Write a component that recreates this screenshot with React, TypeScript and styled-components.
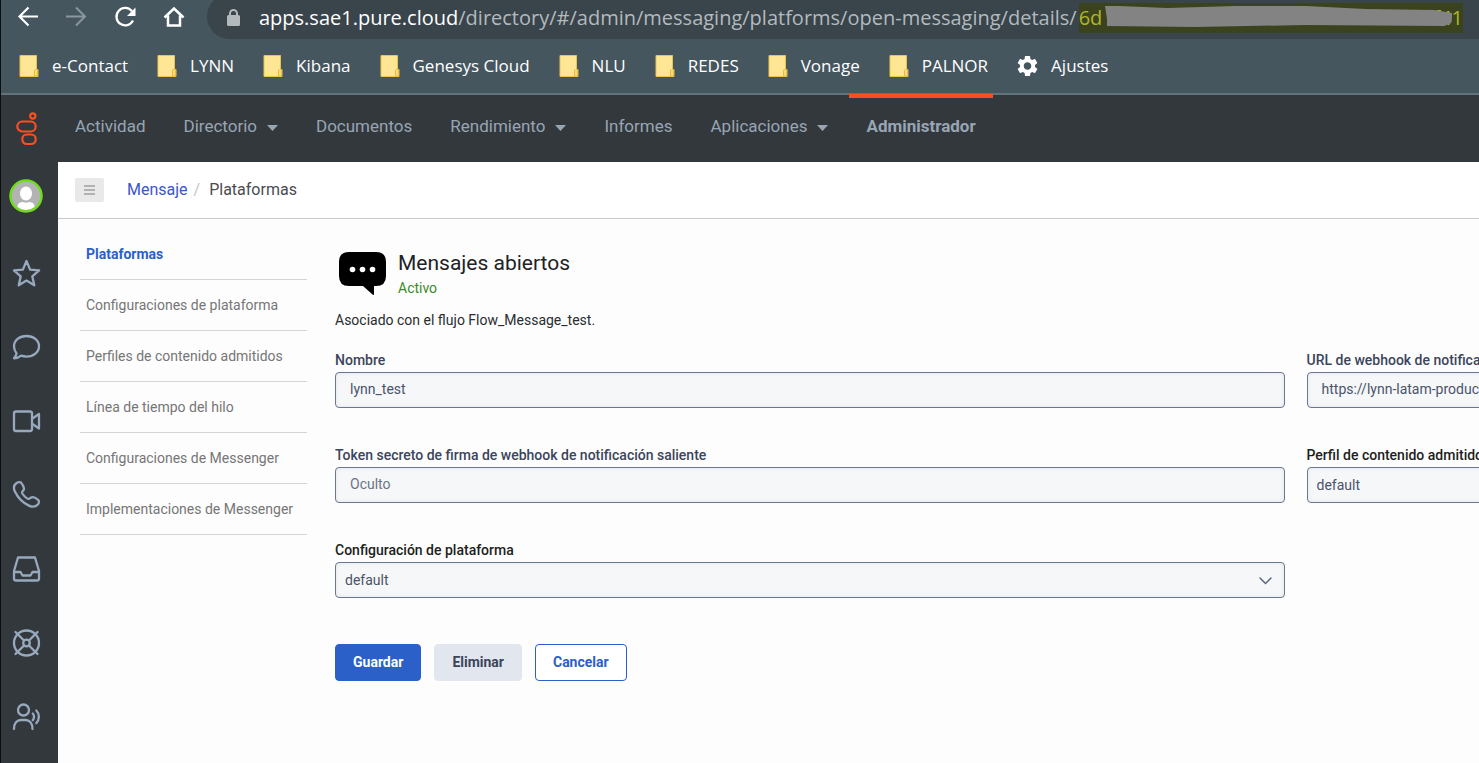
import React from "react";
import styled, { createGlobalStyle, css } from "styled-components";

const ui = `Roboto, "Liberation Sans", sans-serif`;
const chrome = `"Open Sans", "Noto Sans", sans-serif`;

const Global = createGlobalStyle`
  *, *::before, *::after { box-sizing: border-box; }
  body { margin: 0; font-family: ${ui}; font-size: 14px; background: #fdfdfd; overflow: hidden; }
  a { text-decoration: none; color: inherit; }
  button { font: inherit; padding: 0; border: 0; background: none; cursor: pointer; }
  svg { display: block; flex: none; }
`;

const Page = styled.div`
  min-height: 100vh;
  display: flex;
  flex-direction: column;
  border-left: 1px solid #0b0d0f;
  background: #33383d;
`;

/* browser frame */
const Browser = styled.header`
  background: #45565f;
  color: #fff;
  font-family: ${chrome};
  border-bottom: 2px solid #61737c;
`;
const AddressRow = styled.div`
  display: flex;
  align-items: flex-start;
  height: 39px;
  overflow: hidden;
`;
const Tools = styled.div`
  display: flex;
  gap: 26px;
  padding: 5px 21px 0 15px;
`;
const ToolButton = styled.button<{ $dim?: boolean }>`
  width: 23px;
  height: 24px;
  color: ${(p) => (p.$dim ? "#8b979d" : "#fff")};
`;
const AddressBar = styled.div`
  flex: 1;
  min-width: 0;
  display: flex;
  align-items: center;
  height: 45px;
  margin-top: -6px;
  padding: 3px 16px 0 20px;
  border-radius: 23px 0 0 23px;
  background: #39444b;
  font-size: 20px;
  line-height: 30px;
  white-space: nowrap;
  color: #b3babe;
`;
const Host = styled.span`
  margin-left: 19px;
  color: #fff;
`;
const Token = styled.span`
  flex: 1;
  position: relative;
  display: flex;
  justify-content: space-between;
  margin-left: 2px;
  background: #3a431d;
  color: #b0b52c;
`;
const Scribble = styled.svg`
  position: absolute;
  left: 26px;
  top: 3px;
  width: calc(100% - 37px);
  height: 21px;
`;
const Bookmarks = styled.nav`
  display: flex;
  align-items: center;
  gap: 29px;
  height: 54px;
  padding: 0 0 1px 18px;
  font-size: 17px;
`;
const Bookmark = styled.a`
  display: flex;
  align-items: center;
  gap: 13px;
  white-space: nowrap;
`;

/* application frame */
const Shell = styled.div`
  flex: 1;
  display: grid;
  grid-template-columns: 57px minmax(0, 1fr);
`;
const Rail = styled.aside`
  display: flex;
  flex-direction: column;
  background: #33383d;
  color: #98a9be;
`;
const LogoLink = styled.a`
  padding: 17px 0 0 15px;
  height: 84px;
`;
const RailButton = styled.button`
  height: 74px;
  padding-left: 11px;
  color: inherit;
  display: flex;
  align-items: center;
`;
const Avatar = styled.button`
  width: 34px;
  height: 34px;
  margin: 0 0 23px 8px;
`;
const Body = styled.div`
  display: flex;
  flex-direction: column;
  min-width: 0;
`;
const TopNav = styled.nav`
  display: flex;
  gap: 4px;
  height: 67px;
  background: #33383d;
`;
const TopItem = styled.a<{ $active?: boolean }>`
  display: flex;
  align-items: center;
  gap: 10px;
  padding: 0 17px 8px;
  border-top: 4px solid ${(p) => (p.$active ? "#f5501e" : "transparent")};
  margin-top: -1px;
  color: #98a5b3;
  font-size: 17px;
  font-weight: ${(p) => (p.$active ? 700 : 400)};
  white-space: nowrap;
`;
const Crumbs = styled.div`
  display: flex;
  align-items: center;
  height: 57px;
  padding: 0 17px 1px;
  border-bottom: 1px solid #c9c9c9;
  background: #fff;
  font-size: 16px;
  color: #4a4c50;
`;
const MenuButton = styled.button`
  display: grid;
  place-items: center;
  width: 29px;
  height: 24px;
  margin-right: 23px;
  border-radius: 2px;
  background: #e9e9e9;
  color: #a0a0a0;
`;
const CrumbLink = styled.a`
  color: #3a56cf;
`;
const Slash = styled.span`
  margin: 0 9px 0 6px;
  color: #c4c4c4;
`;
const Workspace = styled.div`
  flex: 1;
  display: grid;
  grid-template-columns: 227px minmax(0, 1fr);
  gap: 28px;
  padding: 10px 0 0 22px;
  background: #fdfdfd;
`;
const SideNav = styled.nav`
  display: flex;
  flex-direction: column;
`;
const SideItem = styled.a<{ $active?: boolean }>`
  height: 51px;
  padding-left: 6px;
  border-bottom: 1px solid #d4d4d4;
  line-height: 50px;
  font-size: 14px;
  white-space: nowrap;
  color: ${(p) => (p.$active ? "#2b5fcc" : "#767676")};
  font-weight: ${(p) => (p.$active ? 700 : 400)};
`;
const Main = styled.main`
  overflow: hidden;
  padding-top: 19px;
`;
const Heading = styled.div`
  display: flex;
  gap: 11px;
  padding-left: 3px;
`;
const Title = styled.h1`
  margin: 0;
  font-size: 21px;
  line-height: 30px;
  font-weight: 400;
  color: #202224;
`;
const Status = styled.p`
  margin: 0;
  line-height: 20px;
  color: #3c8a28;
`;
const Note = styled.p`
  margin: 12px 0 20px;
  line-height: 20px;
  color: #2a2c2e;
`;
const Form = styled.form`
  display: grid;
  grid-template-columns: 83% 83%;
  column-gap: 22px;
  row-gap: 37px;
`;
const Field = styled.div`
  display: flex;
  flex-direction: column;
`;
const Label = styled.label<{ $dark?: boolean }>`
  height: 22px;
  line-height: 20px;
  font-size: 14px;
  font-weight: 500;
  white-space: nowrap;
  color: ${(p) => (p.$dark ? "#1c1e20" : "#3b455c")};
`;
const control = css`
  width: 100%;
  height: 36px;
  border: 1px solid #6b7690;
  border-radius: 4px;
  background: #f6f7f9;
  box-shadow: inset 0 0 4px #dfe3ea;
  font-family: ${ui};
  font-size: 14px;
  color: #4a5468;
`;
const Input = styled.input`
  ${control}
  padding: 0 14px 2px;
  &::placeholder { color: #6b7484; opacity: 1; }
`;
const SelectBox = styled.div`
  position: relative;
`;
const Select = styled.select`
  ${control}
  appearance: none;
  padding: 0 9px;
`;
const Chevron = styled.svg`
  position: absolute;
  right: 13px;
  top: 15px;
`;
const Actions = styled.div`
  grid-column: 1 / -1;
  display: flex;
  gap: 13px;
  padding-top: 9px;
`;
const tones = {
  primary: css`background: #2a60c8; border-color: #2a60c8; color: #fff;`,
  muted: css`background: #e2e6ee; border-color: #e2e6ee; color: #3b455c;`,
  outline: css`background: #fff; border-color: #2a60c8; color: #2a60c8;`,
};
const Button = styled.button<{ $tone: keyof typeof tones }>`
  height: 37px;
  padding: 0 17px 2px;
  border: 1px solid;
  border-radius: 4px;
  font-size: 14px;
  font-weight: 700;
  ${(p) => tones[p.$tone]}
`;

const Folder = () => (
  <svg width="20" height="22" viewBox="0 0 20 22">
    <path d="M1 .5h16.500v14h1.500v7H1z" fill="#ffe694" stroke="#e9c64b" />
    <path d="M15.500 21v-5.500q0-1 1-1h2v6.500z" fill="#fbdc7c" stroke="#e3bd3c" />
  </svg>
);
const Caret = () => (
  <svg width="11" height="9" viewBox="0 0 11 9"><path d="M0 3h11L5.500 9z" fill="currentColor" /></svg>
);
const Line = ({ children }: { children: React.ReactNode }) => (
  <svg width="29" height="29" viewBox="0 0 29 29" fill="none" stroke="currentColor" strokeWidth="2.300" strokeLinejoin="round" strokeLinecap="round">
    {children}
  </svg>
);

const folders = ["e-Contact", "LYNN", "Kibana", "Genesys Cloud", "NLU", "REDES", "Vonage", "PALNOR"];
const topItems = [
  { label: "Actividad" },
  { label: "Directorio", menu: true },
  { label: "Documentos" },
  { label: "Rendimiento", menu: true },
  { label: "Informes" },
  { label: "Aplicaciones", menu: true },
  { label: "Administrador", active: true },
];
const sideItems = [
  "Plataformas",
  "Configuraciones de plataforma",
  "Perfiles de contenido admitidos",
  "Línea de tiempo del hilo",
  "Configuraciones de Messenger",
  "Implementaciones de Messenger",
];
const railItems = [
  { label: "Favoritos", icon: <path d="M14.500 2l3.600 8.600 9 .8-6.800 6 2 8.900-7.800-4.700-7.800 4.700 2-8.900-6.800-6 9-.8z" /> },
  { label: "Chat", icon: <path d="M14.500 3C21.600 3 27 7.500 27 13.300S21.600 23.600 14.500 23.600c-1.900 0-3.600-.3-5.200-.9-1.800 1.400-4 2.600-7.300 2.600 1.400-1.500 2.300-3.200 2.500-5C2.900 18.400 2 16 2 13.300 2 7.500 7.400 3 14.500 3z" /> },
  { label: "Video", icon: <><rect x="2" y="4.500" width="18" height="19.500" rx="2" /><path d="M20.500 11.500l6.500-4.500v14.500l-6.500-4.500" /></> },
  { label: "Teléfono", icon: <path d="M4 2.500c2-1.600 4.500-1.800 5.500-.4 1.500 2 2.700 4.600 2.400 6.200-.3 1.600-2 2-1.900 3.400.2 1.600 4.500 5.900 6.200 6.200 1.500.2 2-1.300 3.500-1.600 2-.4 4.500.9 6.400 2.500 1.300 1.100 1 3.200-.3 4.700-2.200 2.500-5.300 2.800-8.900 1.100C11.500 22 5.500 16 2.900 10.500 1.500 7.500 1.900 4.200 4 2.500z" /> },
  { label: "Bandeja", icon: <path d="M6 2.500h17l4 13.500v7.500a2 2 0 0 1-2 2H4a2 2 0 0 1-2-2V16zM2 17h6.500l2 3.500h8l2-3.500H27" /> },
  { label: "Ayuda", icon: <><circle cx="14.500" cy="14" r="12.500" /><circle cx="14.500" cy="14" r="3.300" /><path d="M3.500 3l8.500 8.500M25.500 3l-8.500 8.500M3.500 25l8.500-8.500M25.500 25l-8.500-8.500" /></> },
  { label: "Agentes", icon: <><circle cx="11.500" cy="7" r="5.500" /><path d="M2 26c0-6 3-9 7-9h4.500c4 0 7 3 7 9M20.800 10.500c1.600 1.600 1.600 5 0 6.600M24.300 7.500c3.400 3.200 3.400 9.400 0 12.600" /></> },
];

function SelectField({ id, label }: { id: string; label: string }) {
  return (
    <Field>
      <Label htmlFor={id} $dark>{label}</Label>
      <SelectBox>
        <Select id={id} defaultValue="default"><option>default</option></Select>
        <Chevron width="13" height="8" viewBox="0 0 13 8" fill="none" stroke="#5b667e" strokeWidth="1.500" strokeLinecap="round">
          <path d="M1 1l5.500 5.500L12 1" />
        </Chevron>
      </SelectBox>
    </Field>
  );
}

export default function App() {
  return (
    <Page>
      <Global />
      <Browser>
        <AddressRow>
          <Tools>
            <ToolButton aria-label="Atrás">
              <svg width="23" height="24" viewBox="0 0 23 24" fill="none" stroke="currentColor" strokeWidth="2.200"><path d="M22 11.500H4M12.500 2.500l-9 9 9 9" /></svg>
            </ToolButton>
            <ToolButton aria-label="Adelante" $dim>
              <svg width="23" height="24" viewBox="0 0 23 24" fill="none" stroke="currentColor" strokeWidth="2"><path d="M1 11.500h19M11 2.500l9 9-9 9" /></svg>
            </ToolButton>
            <ToolButton aria-label="Recargar">
              <svg width="23" height="24" viewBox="0 0 23 24"><path d="M18 6.200A8.700 8.700 0 1 0 19 15.500" fill="none" stroke="currentColor" strokeWidth="2.300" /><path d="M21.500 2.500v8.500H13z" fill="currentColor" /></svg>
            </ToolButton>
            <ToolButton aria-label="Inicio">
              <svg width="23" height="24" viewBox="0 0 23 24" fill="none" stroke="currentColor" strokeWidth="2.500"><path d="M1.500 12.500L11 3.500l9.500 9M5 10.500v10h12v-10" /></svg>
            </ToolButton>
          </Tools>
          <AddressBar>
            <svg width="13" height="18" viewBox="0 0 13 18"><rect x="0" y="6" width="13" height="11" rx="1.500" fill="#b4b9bc" /><path d="M3 7V4.500a3.500 3.500 0 0 1 7 0V7" fill="none" stroke="#b4b9bc" strokeWidth="2" /></svg>
            <Host>apps.sae1.pure.cloud</Host>
            <span>/directory/#/admin/messaging/platforms/open-messaging/details/</span>
            <Token>
              <span>6d</span>
              <span>ff41</span>
              <Scribble viewBox="0 0 346 21" preserveAspectRatio="none"><path d="M0 0L14 0 62 2 130 0 200 0 260 3 328 4 346 7 345 17 338 20 200 19 90 21 2 20 2 13z" fill="#838383" /></Scribble>
            </Token>
          </AddressBar>
        </AddressRow>
        <Bookmarks>
          {folders.map((f) => <Bookmark href="#" key={f}><Folder />{f}</Bookmark>)}
          <Bookmark href="#">
            <svg width="21" height="22" viewBox="2 2 20 20" fill="#fff"><path d="M19.140 12.940c.040-.300.060-.610.060-.940 0-.320-.020-.640-.070-.940l2.030-1.580a.49.49 0 0 0 .12-.61l-1.920-3.320a.488.488 0 0 0-.59-.22l-2.390.96c-.5-.38-1.030-.7-1.620-.94l-.36-2.540a.484.484 0 0 0-.48-.41h-3.840c-.24 0-.43.17-.47.41l-.36 2.540c-.59.24-1.130.57-1.620.94l-2.390-.96c-.22-.08-.47 0-.59.22L2.740 8.870c-.12.21-.08.47.12.61l2.030 1.580c-.05.3-.09.63-.09.94s.02.64.07.94l-2.030 1.580a.49.49 0 0 0-.12.61l1.920 3.320c.12.22.37.29.59.22l2.390-.96c.5.38 1.030.7 1.620.94l.36 2.540c.05.24.24.41.48.41h3.840c.24 0 .44-.17.47-.41l.36-2.540c.59-.24 1.130-.56 1.620-.94l2.390.96c.22.08.47 0 .59-.22l1.920-3.320c.12-.22.07-.47-.12-.61l-2.010-1.580zM12 15.600c-1.980 0-3.600-1.620-3.600-3.600s1.620-3.600 3.600-3.600 3.600 1.620 3.600 3.600-1.620 3.600-3.600 3.600z" /></svg>
            Ajustes
          </Bookmark>
        </Bookmarks>
      </Browser>
      <Shell>
        <Rail>
          <LogoLink href="#" aria-label="Genesys">
            <svg width="22" height="34" viewBox="0 0 22 34" fill="none" stroke="#fa4f20" strokeWidth="2.200"><circle cx="16.800" cy="4" r="2.600" /><rect x="1.300" y="9.500" width="18.400" height="10" rx="5" /><rect x="6.300" y="22.500" width="13.400" height="9.500" rx="4.500" /></svg>
          </LogoLink>
          <Avatar aria-label="Perfil">
            <svg width="34" height="34" viewBox="0 0 34 34"><circle cx="17" cy="17" r="15.500" fill="#b3b3b3" stroke="#6fdd1c" strokeWidth="2.500" /><ellipse cx="17" cy="14.500" rx="6" ry="7" fill="#fff" /><path d="M8.500 28c0-4.500 3.500-5 5.500-5 2 1 4 1 6 0 2 0 5.500.5 5.500 5a14 14 0 0 1-17 0z" fill="#fff" /></svg>
          </Avatar>
          {railItems.map((r) => <RailButton key={r.label} aria-label={r.label}><Line>{r.icon}</Line></RailButton>)}
        </Rail>
        <Body>
          <TopNav>
            {topItems.map((t) => <TopItem href="#" key={t.label} $active={t.active}>{t.label}{t.menu && <Caret />}</TopItem>)}
          </TopNav>
          <Crumbs>
            <MenuButton aria-label="Menú">
              <svg width="11" height="10" viewBox="0 0 11 10" stroke="currentColor" strokeWidth="1.500"><path d="M0 1h11M0 5h11M0 9h11" /></svg>
            </MenuButton>
            <CrumbLink href="#">Mensaje</CrumbLink>
            <Slash>/</Slash>
            <span>Plataformas</span>
          </Crumbs>
          <Workspace>
            <SideNav>
              {sideItems.map((s, i) => <SideItem href="#" key={s} $active={i === 0}>{s}</SideItem>)}
            </SideNav>
            <Main>
              <Heading>
                <svg width="49" height="48" viewBox="0 0 49 48"><path d="M11 4h27q10 0 10 10v14q0 10-10 10h-2v8q0 1.500-1.500.5L25 38H11Q1 38 1 28V14Q1 4 11 4z" fill="#000" /><g fill="#fff"><circle cx="14.500" cy="21.500" r="2.800" /><circle cx="24.500" cy="21.500" r="2.800" /><circle cx="34.500" cy="21.500" r="2.800" /></g></svg>
                <div>
                  <Title>Mensajes abiertos</Title>
                  <Status>Activo</Status>
                </div>
              </Heading>
              <Note>Asociado con el flujo Flow_Message_test.</Note>
              <Form onSubmit={(e) => e.preventDefault()}>
                <Field>
                  <Label htmlFor="name">Nombre</Label>
                  <Input id="name" defaultValue="lynn_test" />
                </Field>
                <Field>
                  <Label htmlFor="url">URL de webhook de notificación saliente</Label>
                  <Input id="url" defaultValue="https://lynn-latam-production" />
                </Field>
                <Field>
                  <Label htmlFor="token">Token secreto de firma de webhook de notificación saliente</Label>
                  <Input id="token" placeholder="Oculto" />
                </Field>
                <SelectField id="profile" label="Perfil de contenido admitido" />
                <SelectField id="config" label="Configuración de plataforma" />
                <Actions>
                  <Button $tone="primary">Guardar</Button>
                  <Button $tone="muted" type="button">Eliminar</Button>
                  <Button $tone="outline" type="button">Cancelar</Button>
                </Actions>
              </Form>
            </Main>
          </Workspace>
        </Body>
      </Shell>
    </Page>
  );
}
